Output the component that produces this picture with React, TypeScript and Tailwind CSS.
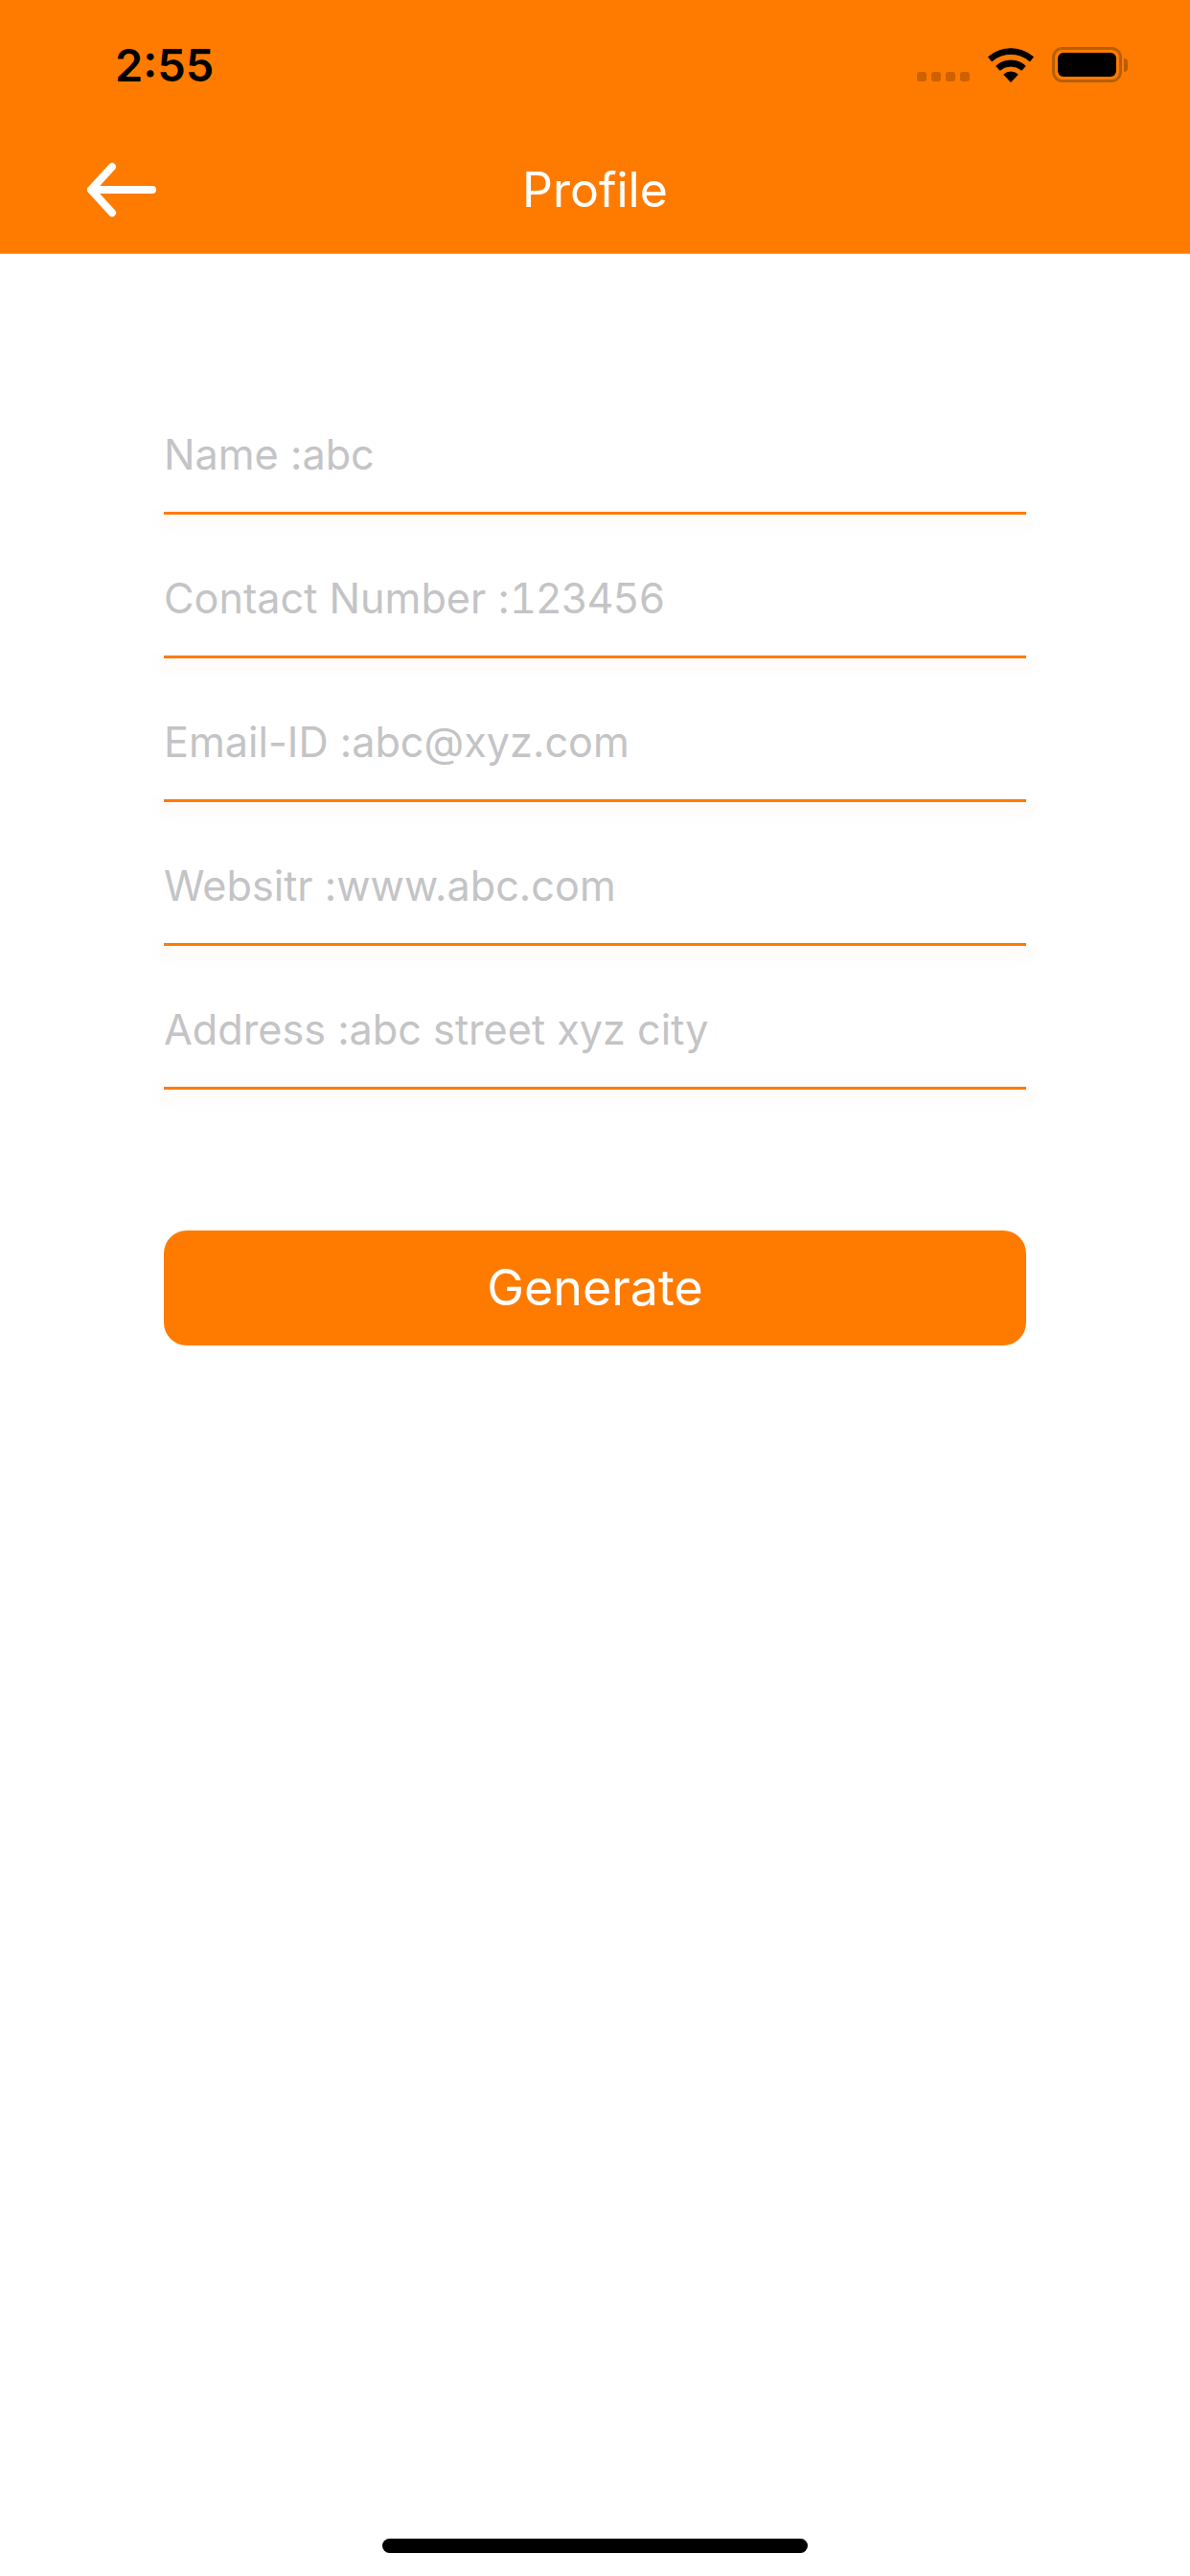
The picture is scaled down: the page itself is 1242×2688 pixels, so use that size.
import type { ReactNode } from "react";

const fields: { id: string; text: ReactNode }[] = [
  { id: "name", text: "Name :abc" },
  {
    id: "contact",
    text: (
      <>
        Contact Number :<span className="tabular-nums tracking-[-1.1px]">123456</span>
      </>
    ),
  },
  { id: "email", text: "Email-ID :abc@xyz.com" },
  { id: "website", text: "Websitr :www.abc.com" },
  { id: "address", text: "Address :abc street xyz city" },
];

const Wifi = () => (
  <svg width="48" height="36" viewBox="0 0 48 36" fill="#000" stroke="#000" strokeWidth="1" strokeLinejoin="round">
    <path d="M0.500 9.500 A36 36 0 0 1 47.500 9.500 L43.800 13.900 A29.700 29.700 0 0 0 4.200 13.900 Z" />
    <path d="M8.700 18.900 A23 23 0 0 1 39.300 18.900 L35.300 23.300 A17 17 0 0 0 12.700 23.300 Z" />
    <path d="M16.700 27.800 A11 11 0 0 1 31.300 27.800 L24 35.500 Z" />
  </svg>
);

const Battery = () => (
  <div className="flex items-center">
    <div className="w-[73px] h-[37px] rounded-[11px] border-[3px] border-[#b85e00] p-[3px]">
      <div className="w-full h-full rounded-[6px] bg-black" />
    </div>
    <div className="w-[4px] h-[14px] ml-[2px] rounded-r-full bg-[#b85e00]" />
  </div>
);

const StatusBar = () => (
  <div className="h-[132px] flex items-start justify-between pl-[120px] pr-[65px] pt-[49px]">
    <span className="font-['Inter',sans-serif] font-semibold text-[47px] leading-[37px] text-black">2:55</span>
    <div className="flex items-end">
      <div className="flex gap-[5px] mb-[1px] mr-[19px]">
        <div className="w-[10px] h-[10px] rounded-[3px] bg-[#cc6200]" />
        <div className="w-[10px] h-[10px] rounded-[3px] bg-[#cc6200]" />
        <div className="w-[10px] h-[10px] rounded-[3px] bg-[#cc6200]" />
        <div className="w-[10px] h-[10px] rounded-[3px] bg-[#cc6200]" />
      </div>
      <div className="mr-[19px]">
        <Wifi />
      </div>
      <Battery />
    </div>
  </div>
);

const NavBar = () => (
  <div className="relative h-[132px] flex items-center justify-center">
    <svg className="absolute left-[90px] top-[36px]" width="74" height="60" viewBox="0 0 74 60" fill="none">
      <path d="M69 30 H5 M27 6 L5 30 L27 54" stroke="#fff" strokeWidth="8" strokeLinecap="round" strokeLinejoin="round" />
    </svg>
    <span className="font-['Inter',sans-serif] text-[50px] text-white">Profile</span>
  </div>
);

const Field = ({ text }: { text: ReactNode }) => (
  <div className="h-[150px] flex flex-col justify-end">
    <div className="relative bg-white h-[96px] flex items-start">
      <span className="font-['Inter',sans-serif] text-[43.2px] leading-[54px] text-[#c4c4c6] mt-[9px]">{text}</span>
    </div>
    <div className="h-[3px] bg-[#ff7b00] shadow-[0_6px_16px_6px_rgba(255,123,0,0.035)]" />
  </div>
);

export default function App() {
  return (
    <div className="w-[1242px] h-[2688px] flex flex-col bg-white">
      <header className="bg-[#ff7b00] border-b border-[#a9a9a9]">
        <StatusBar />
        <NavBar />
      </header>
      <main className="flex-1 flex flex-col px-[171px] pt-[122px]">
        {fields.map((f) => (
          <Field key={f.id} text={f.text} />
        ))}
        <button className="mt-[147px] h-[120px] rounded-[24px] bg-[#ff7b00] font-['Inter',sans-serif] text-[52px] text-white">
          Generate
        </button>
      </main>
      <div className="flex justify-center pb-[24px]">
        <div className="w-[444px] h-[15px] rounded-full bg-black" />
      </div>
    </div>
  );
}
